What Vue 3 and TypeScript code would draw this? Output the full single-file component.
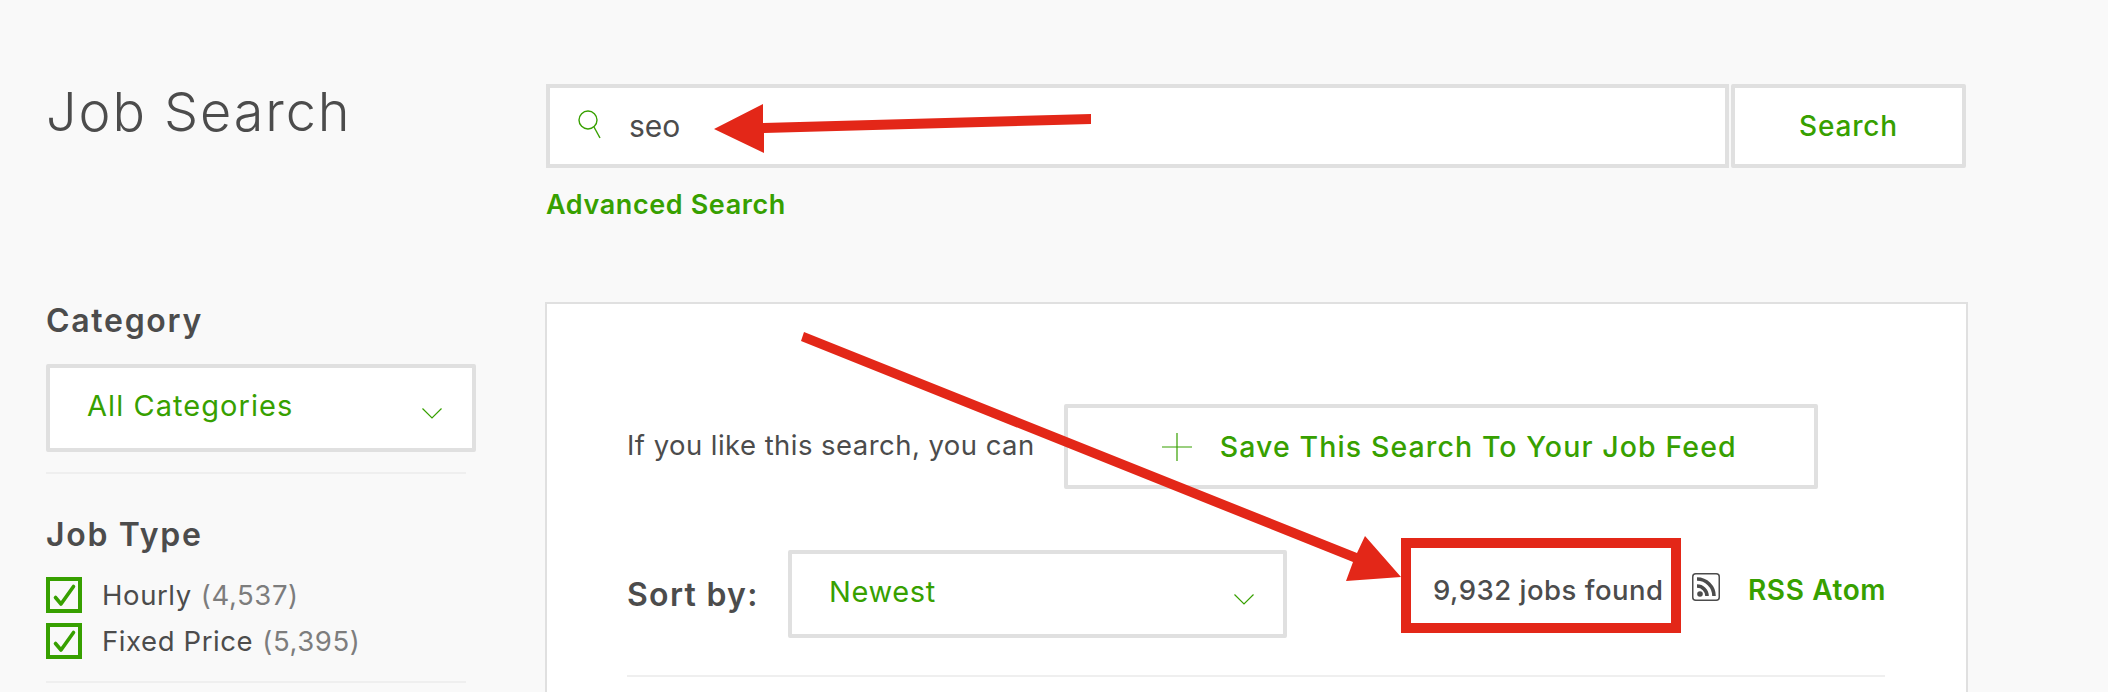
<template>
  <div class="page">
    <h1 class="title">Job Search</h1>
    <div class="search-area">
      <div class="search-row">
        <div class="search-box">
          <svg class="search-icon" width="28" height="30" viewBox="0 0 28 30" fill="none">
            <circle cx="11" cy="10" r="9" stroke="#37a000" stroke-width="1.4" />
            <path d="M17 17 L23 28" stroke="#37a000" stroke-width="1.4" />
          </svg>
          <span class="search-value">{{ query }}</span>
        </div>
        <button class="search-btn">Search</button>
      </div>
      <a class="advanced">Advanced Search</a>
    </div>

    <aside class="sidebar">
      <h3 class="side-title category-title">Category</h3>
      <div class="select category-select">
        <span>All Categories</span>
        <svg class="chevron" width="20" height="11" viewBox="0 0 20 11" fill="none">
          <path d="M0.5 0.5 L10 10 L19.5 0.5" stroke="#37a000" stroke-width="1.2" />
        </svg>
      </div>
      <div class="side-rule"></div>
      <h3 class="side-title type-title">Job Type</h3>
      <ul class="types">
        <li v-for="t in jobTypes" :key="t.label">
          <span class="check">
            <svg width="28" height="28" viewBox="0 0 28 28" fill="none">
              <path d="M5.5 16.5 L11 23 L23.5 5.5" stroke="#37a000" stroke-width="3.6" stroke-linecap="round" stroke-linejoin="round" />
            </svg>
          </span>
          <span class="type-label">{{ t.label }}</span>
          <span class="type-count">({{ t.count }})</span>
        </li>
      </ul>
      <div class="side-rule"></div>
    </aside>

    <main class="panel">
      <div class="save-row">
        <span class="save-text">If you like this search, you can</span>
        <button class="save-btn">
          <svg width="30" height="28" viewBox="0 0 30 28" fill="none">
            <path d="M0 14 H30 M15 0 V28" stroke="#37a000" stroke-width="1.2" />
          </svg>
          <span>Save This Search To Your Job Feed</span>
        </button>
      </div>
      <div class="sort-row">
        <span class="sort-label">Sort by:</span>
        <div class="select sort-select">
          <span>Newest</span>
          <svg class="chevron" width="20" height="11" viewBox="0 0 20 11" fill="none">
            <path d="M0.5 0.5 L10 10 L19.5 0.5" stroke="#37a000" stroke-width="1.2" />
          </svg>
        </div>
        <span class="found">9,932 jobs found</span>
        <svg class="rss" width="28" height="28" viewBox="0 0 28 28" fill="none">
          <rect x="0.75" y="0.75" width="26.5" height="26.5" rx="3" stroke="#4c4c4c" stroke-width="1.5" />
          <circle cx="8" cy="21" r="2.8" fill="#4c4c4c" />
          <path d="M5 13 A10 10 0 0 1 15 23" stroke="#4c4c4c" stroke-width="3.6" />
          <path d="M5 6 A17 17 0 0 1 22 23" stroke="#4c4c4c" stroke-width="3.6" />
        </svg>
        <a class="rss-link">RSS Atom</a>
      </div>
      <div class="panel-rule"></div>
    </main>

    <!-- annotations drawn on top of the screenshot -->
    <svg class="marks" width="2108" height="692" viewBox="0 0 2108 692">
      <polygon points="1091,114 1091,124 764,133 764,153 714,129 763,104 763,123" fill="#e32718" />
      <polygon points="804,332 801,341 1353,562 1346,581 1401,577 1365,536 1357,553" fill="#e32718" />
      <rect x="1406" y="543" width="270" height="85" fill="none" stroke="#e32718" stroke-width="10" />
    </svg>
  </div>
</template>

<script setup lang="ts">
const query = 'seo'
const jobTypes = [
  { label: 'Hourly', count: '4,537' },
  { label: 'Fixed Price', count: '5,395' },
]
</script>

<style>
body { margin: 0; background: #f9f9f9; }
</style>

<style scoped>
.page {
  position: relative;
  width: 2108px;
  height: 692px;
  overflow: hidden;
  box-sizing: border-box;
  padding-left: 46px;
  display: grid;
  grid-template-columns: 499px 1423px;
  grid-template-rows: 302px 1fr;
  background: #f9f9f9;
  color: #4c4c4c;
  font-family: Inter, "Liberation Sans", sans-serif;
}
.title { margin: 77px 0 0; font-size: 54px; line-height: 70px; font-weight: 300; letter-spacing: 1.9px; height: 70px; }
.search-area { padding: 84px 0 0 1px; }
.search-row { display: flex; gap: 2px; }
.search-box {
  width: 1183px;
  height: 84px;
  box-sizing: border-box;
  border: 4px solid #e0e0e0;
  background: #fff;
  display: flex;
  align-items: center;
  padding-left: 27px;
}
.search-icon { margin-top: -2px; }
.search-value { font-size: 30px; margin-left: 24px; margin-top: -1px; }
.search-btn {
  width: 235px;
  height: 84px;
  box-sizing: border-box;
  border: 4px solid #e0e0e0;
  border-radius: 2px;
  background: #fff;
  color: #37a000;
  font: 500 28px Inter, "Liberation Sans", sans-serif;
  letter-spacing: 0.8px;
  padding: 0;
}
.advanced { display: block; margin-top: 19px; font-size: 27px; line-height: 36px; font-weight: 600; color: #37a000; letter-spacing: 0.6px; }
.side-title { margin: 0; font-size: 32px; line-height: 36px; font-weight: 600; letter-spacing: 1.7px; }
.category-title { margin-top: 1px; margin-bottom: 25px; }
.select {
  box-sizing: border-box;
  border: 4px solid #e0e0e0;
  border-radius: 2px;
  background: #fff;
  color: #37a000;
  display: flex;
  align-items: center;
  justify-content: space-between;
  font-size: 29px;
}
.category-select { width: 430px; height: 88px; padding: 0 30px 0 37px; letter-spacing: 1.05px; }
.category-select span { margin-top: -6px; }
.chevron { margin-top: 10px; }
.side-rule { width: 420px; height: 2px; background: #efefef; }
.category-select + .side-rule { margin-top: 20px; }
.type-title { margin-top: 43px; }
.types { list-style: none; margin: 24px 0 0; padding: 0; }
.types li { display: flex; align-items: center; height: 36px; margin-bottom: 10px; font-size: 27.5px; letter-spacing: 0.6px; }
.types + .side-rule { margin-top: 22px; }
.check {
  width: 36px;
  height: 36px;
  box-sizing: border-box;
  border: 4px solid #37a000;
  margin-right: 20px;
  display: flex;
  align-items: center;
  justify-content: center;
}
.type-count { color: #7d7d7d; margin-left: 9px; }
.panel {
  box-sizing: border-box;
  height: 500px;
  border: 2px solid #e0e0e0;
  background: #fff;
  padding: 100px 81px 0 80px;
}
.save-row { display: flex; align-items: flex-start; }
.save-text { font-size: 27.5px; line-height: 36px; margin-top: 23px; letter-spacing: 0.45px; }
.save-btn {
  margin-left: 29px;
  width: 754px;
  height: 85px;
  box-sizing: border-box;
  border: 4px solid #e0e0e0;
  border-radius: 2px;
  background: #fff;
  color: #37a000;
  font: 500 28.5px Inter, "Liberation Sans", sans-serif;
  letter-spacing: 1.1px;
  display: flex;
  align-items: center;
  padding: 0 0 0 94px;
  gap: 28px;
}
.sort-row { display: flex; align-items: flex-start; margin-top: 61px; white-space: nowrap; }
.sort-row > * { flex: none; }
.sort-label { font-size: 32px; font-weight: 600; line-height: 40px; margin-top: 25px; width: 161px; letter-spacing: 1.3px; }
.sort-select { width: 499px; height: 88px; padding: 0 29px 0 37px; letter-spacing: 0.6px; }
.sort-select span { margin-top: -6px; }
.found { font-size: 27.5px; font-weight: 500; line-height: 36px; margin: 22px 0 0 146px; width: 259px; letter-spacing: 0.5px; }
.rss { margin-top: 23px; }
.rss-link { font-size: 28px; font-weight: 600; line-height: 36px; margin: 22px 0 0 28px; color: #37a000; letter-spacing: 0.6px; }
.panel-rule { height: 2px; background: #efefef; margin-top: 37px; }
.marks { position: absolute; left: 0; top: 0; pointer-events: none; }
</style>
